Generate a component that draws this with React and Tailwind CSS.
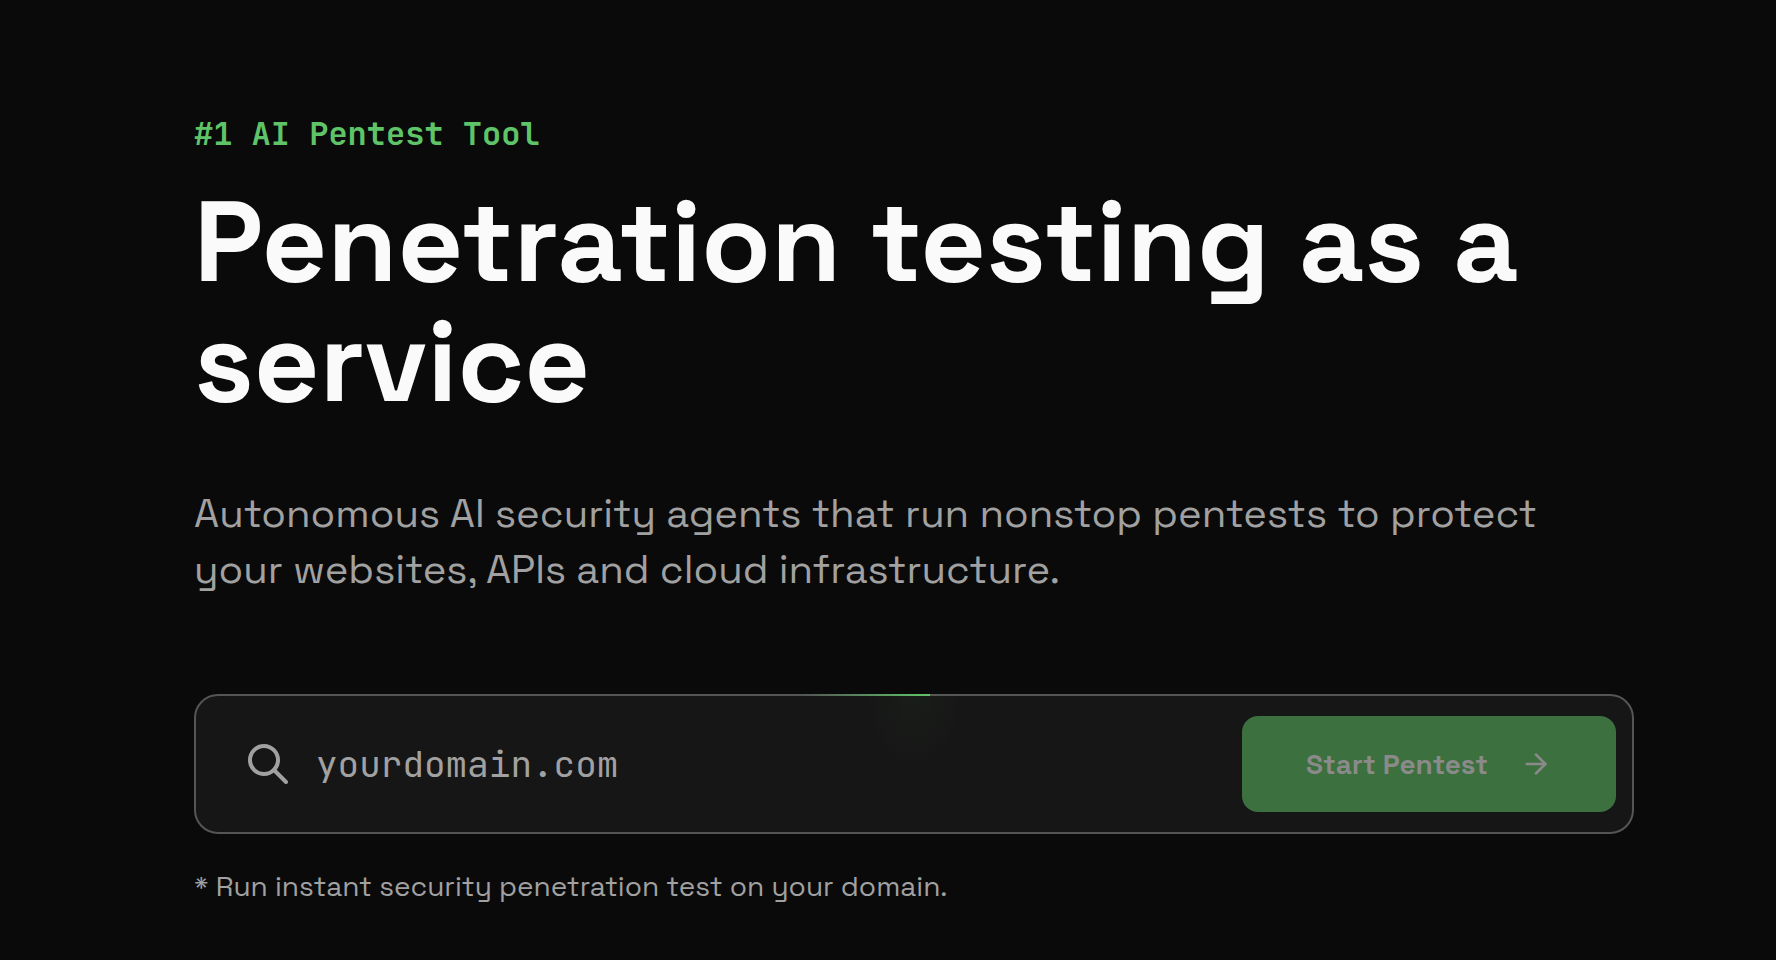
import { useState } from 'react';
import { ArrowRight } from 'lucide-react';

const SearchIcon = () => (
    <svg viewBox="0 0 40 40" fill="none" stroke="currentColor" strokeWidth="4" strokeLinecap="round" className="size-10 shrink-0" aria-hidden="true">
        <circle cx="16" cy="16" r="14" />
        <path d="M26 26 L38 38" />
    </svg>
);

const DomainForm = () => {
    const [domain, setDomain] = useState('');

    return (
        <form
            onSubmit={(e) => e.preventDefault()}
            className="relative flex items-center gap-7 rounded-3xl border-2 border-[#555555] bg-[#161616] py-5 pr-4 pl-13 text-[#a1a1a1]"
        >
            {/* Beam travelling along the top border */}
            <div className="pointer-events-none absolute -top-0.5 right-0 left-0 flex h-20 justify-center pr-16">
                <div className="w-40 bg-radial-[ellipse_30%_95%_at_70%_0%] from-[#5fc468]/4 to-transparent">
                    <div className="h-0.5 w-32 bg-linear-to-r from-transparent to-[#5fc468]" />
                </div>
            </div>

            <label htmlFor="domain"><SearchIcon /></label>
            <input
                id="domain"
                type="text"
                aria-label="Domain"
                placeholder="yourdomain.com"
                value={domain}
                onChange={(e) => setDomain(e.target.value)}
                className="min-w-0 flex-1 bg-transparent font-['JetBrains_Mono','DejaVu_Sans_Mono',monospace] text-4xl outline-none placeholder:text-[#a1a1a1]"
            />
            <button
                type="submit"
                disabled={!domain}
                className="flex h-24 shrink-0 items-center gap-8 rounded-2xl bg-[#3c703e] px-16 text-[28px] font-bold text-[#8a8a8a]"
            >
                Start Pentest
                <ArrowRight className="size-8" strokeWidth={2} />
            </button>
        </form>
    );
};

const App = () => {
    return (
        <main className="min-h-screen bg-[#0a0a0a] pt-[110px] pr-[142px] pb-12 pl-[194px] font-['Space_Grotesk',Inter,sans-serif]">
            <p className="font-['JetBrains_Mono','DejaVu_Sans_Mono',monospace] text-[32px] leading-12 font-bold text-[#5fc468]">
                #1 AI Pentest Tool
            </p>
            <h1 className="mt-6 text-[114px] leading-[120px] font-bold text-[#fafafa]">
                Penetration testing as a service
            </h1>
            <p className="mt-16 text-[40px] leading-14 text-[#a1a1a1]">
                Autonomous AI security agents that run nonstop pentests to protect
                <br />
                your websites, APIs and cloud infrastructure.
            </p>
            <div className="mt-24">
                <DomainForm />
            </div>
            <p className="mt-8 text-[28px] leading-10 text-[#a1a1a1]">
                * Run instant security penetration test on your domain.
            </p>
        </main>
    );
};

export default App;
